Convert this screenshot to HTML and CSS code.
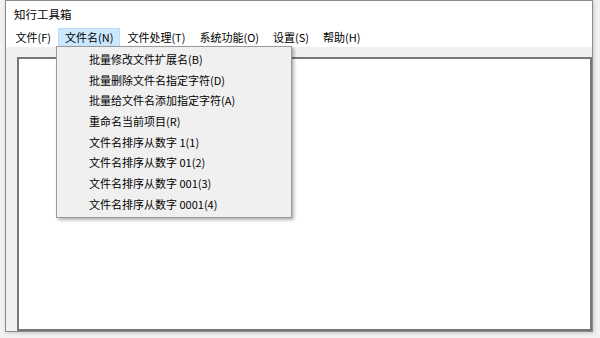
FILE: index.html
```html
<!DOCTYPE html>
<html lang="zh-CN">
<head>
<meta charset="utf-8">
<title>知行工具箱</title>
<link rel="stylesheet" href="styles.css">
</head>
<body>
<div class="window">
  <div class="titlebar">知行工具箱</div>
  <div class="menubar">
    <span class="menu-item">文件(F)</span>
    <span class="menu-item active">文件名(N)</span>
    <span class="menu-item">文件处理(T)</span>
    <span class="menu-item">系统功能(O)</span>
    <span class="menu-item">设置(S)</span>
    <span class="menu-item">帮助(H)</span>
  </div>
  <div class="client">
    <div class="listbox"></div>
  </div>
</div>
<div class="dropdown">
  <div class="dd-item">批量修改文件扩展名(B)</div>
  <div class="dd-item">批量删除文件名指定字符(D)</div>
  <div class="dd-item">批量给文件名添加指定字符(A)</div>
  <div class="dd-item">重命名当前项目(R)</div>
  <div class="dd-item">文件名排序从数字 1(1)</div>
  <div class="dd-item">文件名排序从数字 01(2)</div>
  <div class="dd-item">文件名排序从数字 001(3)</div>
  <div class="dd-item">文件名排序从数字 0001(4)</div>
</div>
</body>
</html>
```
FILE: styles.css
```css
* { box-sizing: border-box; }
html, body {
  margin: 0;
  padding: 0;
}
body {
  width: 600px;
  height: 338px;
  overflow: hidden;
  background: #f2f2f2;
  font-family: "Noto Sans CJK SC", "Microsoft YaHei", sans-serif;
  font-size: 11px;
  color: #000;
  position: relative;
}
.window {
  margin-left: 5px;
  width: 588px;
  height: 332px;
  border: 1px solid #8c8c8c;
  background: #fff;
  display: flex;
  flex-direction: column;
  box-shadow: 1px 1px 4px rgba(0,0,0,0.18);
}
.titlebar {
  height: 27px;
  line-height: 27px;
  padding-left: 8px;
  font-size: 11.5px;
  flex: none;
}
.menubar {
  height: 19px;
  display: flex;
  padding-left: 2.5px;
  flex: none;
}
.menu-item {
  height: 19px;
  line-height: 17px;
  padding: 0 6px;
  border: 1px solid transparent;
  white-space: nowrap;
}
.menu-item.active {
  background: #cce8ff;
  border-color: #b9ddfb;
}
.client {
  flex: 1;
  background: #f0f0f0;
  padding: 10px 0 0 11px;
  display: flex;
}
.listbox {
  flex: 1;
  background: #fff;
  border: 2px solid #777;
}
.dropdown {
  position: absolute;
  left: 56px;
  top: 46px;
  width: 236px;
  height: 172px;
  background: #f0f0f0;
  border: 1px solid #9a9a9a;
  box-shadow: 2px 2px 3px rgba(0,0,0,0.3);
  padding-top: 2px;
}
.dd-item {
  height: 20.7px;
  line-height: 20.7px;
  padding-left: 32px;
  white-space: nowrap;
}
```
